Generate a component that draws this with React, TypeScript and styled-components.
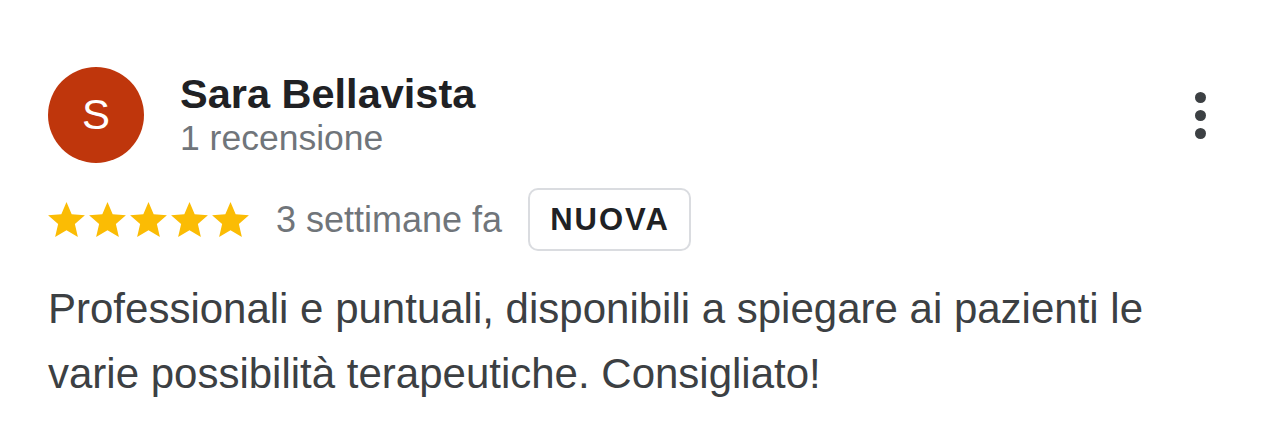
import React from "react";
import styled, { createGlobalStyle } from "styled-components";

const GlobalStyle = createGlobalStyle`
  html, body {
    margin: 0;
    padding: 0;
    background: #ffffff;
  }
  body {
    font-family: "Liberation Sans", Arial, Helvetica, sans-serif;
  }
`;

const Card = styled.div`
  width: 1284px;
  height: 429px;
  box-sizing: border-box;
  padding: 67px 78px 0 48px;
  background: #ffffff;
`;

const Header = styled.div`
  display: flex;
  align-items: center;
`;

const Avatar = styled.div`
  width: 96px;
  height: 96px;
  border-radius: 50%;
  background: #bf360c;
  color: #ffffff;
  display: flex;
  align-items: center;
  justify-content: center;
  font-size: 42px;
  flex-shrink: 0;
`;

const Info = styled.div`
  display: flex;
  flex-direction: column;
  margin-left: 36px;
  flex: 1;
`;

const Name = styled.div`
  font-size: 41.5px;
  line-height: 46px;
  font-weight: 700;
  color: #202124;
`;

const Meta = styled.div`
  font-size: 35.5px;
  line-height: 42px;
  color: #70757a;
`;

const MoreButton = styled.button`
  display: flex;
  flex-direction: column;
  align-items: center;
  gap: 7px;
  padding: 0;
  border: none;
  background: transparent;
  cursor: pointer;
`;

const Dot = styled.span`
  width: 11px;
  height: 11px;
  border-radius: 50%;
  background: #3c4043;
`;

const RatingRow = styled.div`
  display: flex;
  align-items: center;
  margin-top: 25px;
`;

const Stars = styled.div`
  display: flex;
  gap: 4px;
`;

const Ago = styled.span`
  font-size: 36px;
  color: #70757a;
  margin-left: 27px;
`;

const Badge = styled.span`
  display: inline-flex;
  align-items: center;
  justify-content: center;
  box-sizing: border-box;
  height: 63px;
  padding: 0 19px 0 20px;
  margin-left: 26px;
  border: 2px solid #dadce0;
  border-radius: 10px;
  font-size: 31px;
  font-weight: 700;
  letter-spacing: 2px;
  color: #202124;
`;

const Body = styled.p`
  margin: 25px 0 0;
  font-size: 42px;
  line-height: 65px;
  color: #3c4043;
`;

const Star: React.FC = () => (
  <svg width="37" height="35" viewBox="2 2 20 19">
    <path
      fill="#fbbc04"
      d="M12 17.27L18.18 21l-1.64-7.03L22 9.24l-7.19-.61L12 2 9.19 8.63 2 9.24l5.46 4.73L5.82 21z"
    />
  </svg>
);

export default function App() {
  return (
    <>
      <GlobalStyle />
      <Card>
        <Header>
          <Avatar>S</Avatar>
          <Info>
            <Name>Sara Bellavista</Name>
            <Meta>1 recensione</Meta>
          </Info>
          <MoreButton aria-label="Altre opzioni">
            <Dot />
            <Dot />
            <Dot />
          </MoreButton>
        </Header>
        <RatingRow>
          <Stars>
            {[0, 1, 2, 3, 4].map((i) => (
              <Star key={i} />
            ))}
          </Stars>
          <Ago>3 settimane fa</Ago>
          <Badge>NUOVA</Badge>
        </RatingRow>
        <Body>
          Professionali e puntuali, disponibili a spiegare ai pazienti le
          <br />
          varie possibilità terapeutiche. Consigliato!
        </Body>
      </Card>
    </>
  );
}
